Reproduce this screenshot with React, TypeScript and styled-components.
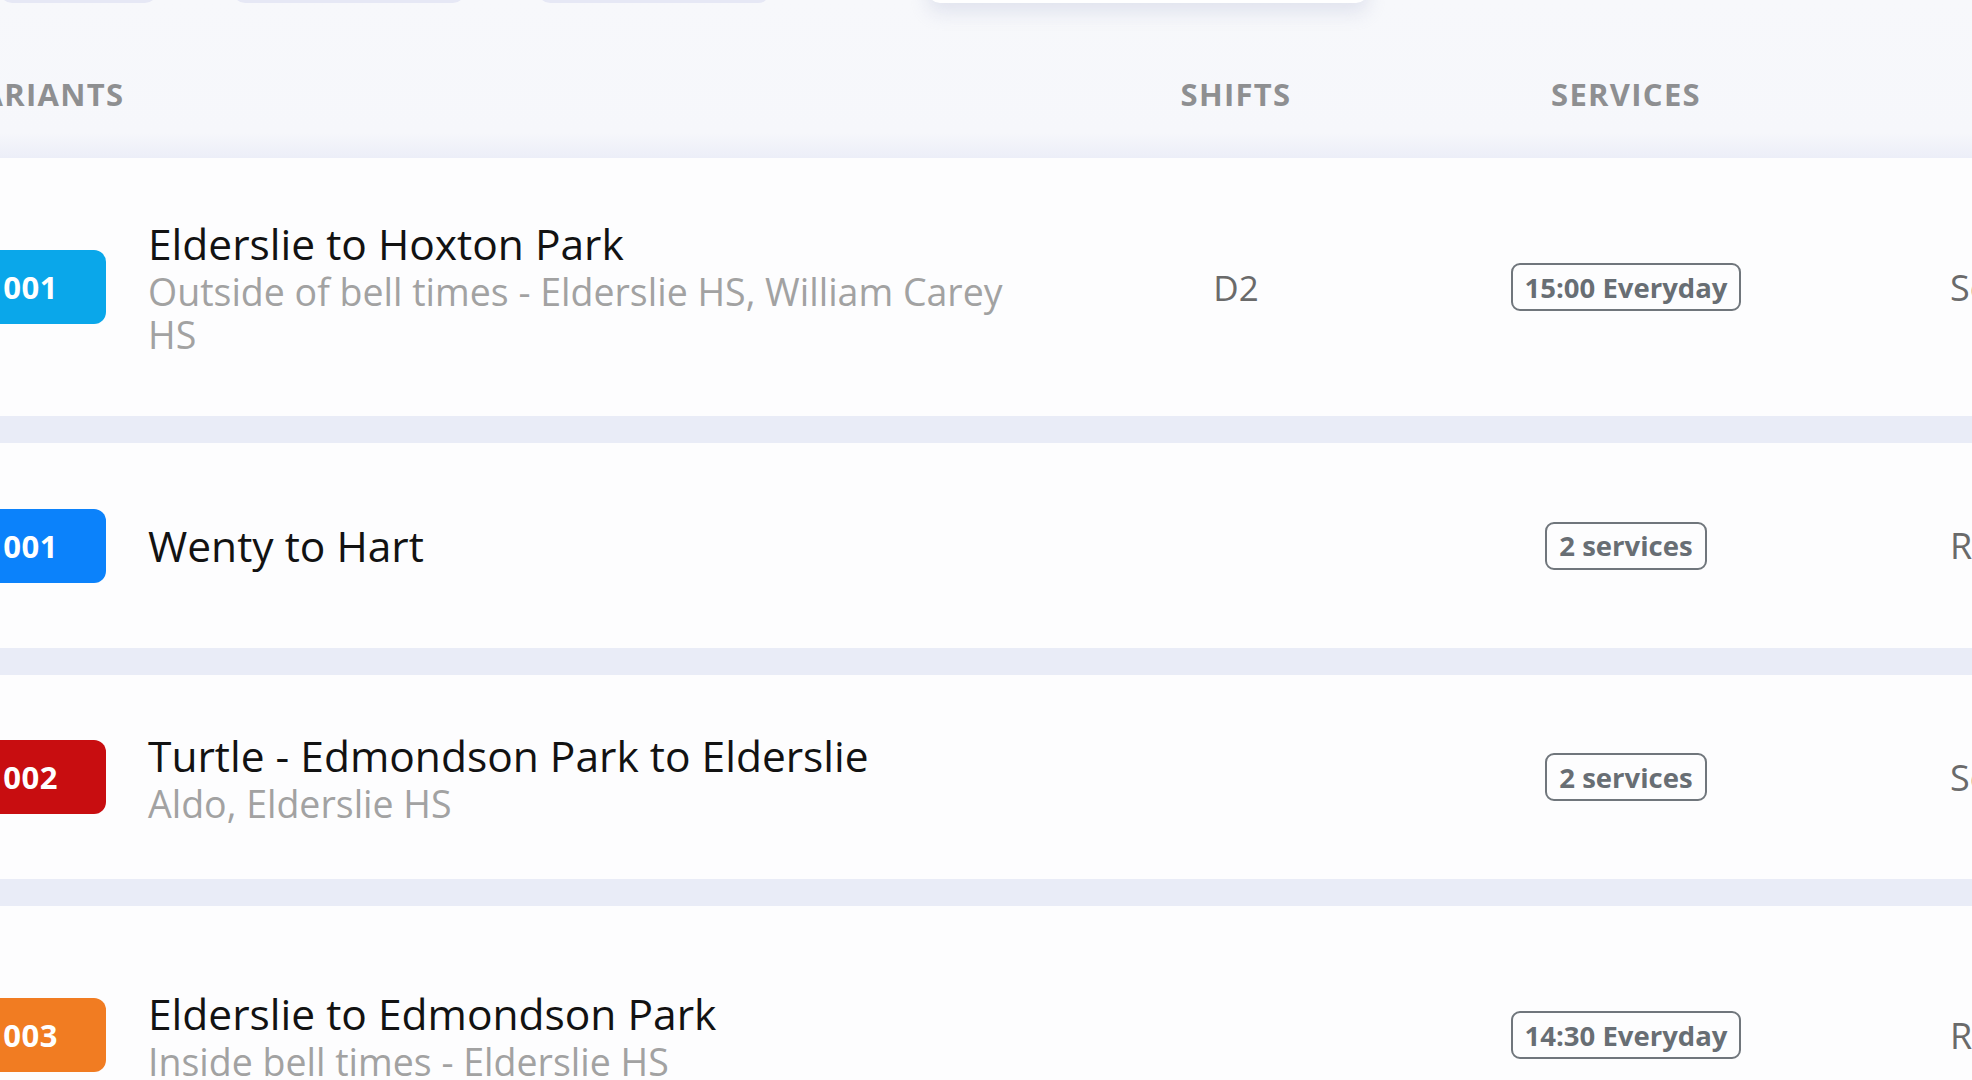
import React from "react";
import styled, { createGlobalStyle } from "styled-components";

const GlobalStyle = createGlobalStyle`
  html, body {
    margin: 0;
    padding: 0;
    background: #e9ecf7;
  }
  body {
    font-family: "Open Sans", "Noto Sans", sans-serif;
    -webkit-font-smoothing: antialiased;
  }
`;

const Screen = styled.div`
  width: 1972px;
  height: 1080px;
  overflow: hidden;
  background: #e9ecf7;
`;

const HeaderWrap = styled.div`
  background: linear-gradient(to bottom, #f7f8fb 0%, #f6f7fb 84%, #eceef8 100%);
  height: 158px;
  display: flex;
  flex-direction: column;
`;

const TopBar = styled.div`
  display: flex;
  align-items: flex-start;
  height: 48px;
  margin-top: -45px;
  flex-shrink: 0;
  position: relative;
  z-index: 1;
`;

const TopButton = styled.div<{ $w: number; $ml: number; $white?: boolean }>`
  width: ${(p) => p.$w}px;
  margin-left: ${(p) => p.$ml}px;
  height: 48px;
  border-radius: 12px;
  background: ${(p) => (p.$white ? "#ffffff" : "#e6e8f5")};
  box-shadow: ${(p) => (p.$white ? "0 10px 18px rgba(200, 205, 225, 0.45)" : "none")};
  flex-shrink: 0;
`;

const Header = styled.div`
  flex: 1;
  display: grid;
  grid-template-columns: 174px 912px 352px 428px 1fr;
  align-items: center;
  margin-left: -26px;
  padding-top: 27px;
`;

const HeadCell = styled.div<{ $align?: "start" | "center"; $span?: number; $offset?: number }>`
  grid-column: span ${(p) => p.$span ?? 1};
  margin-left: ${(p) => p.$offset ?? 0}px;
  text-align: ${(p) => (p.$align === "center" ? "center" : "left")};
  font-family: "Open Sans", sans-serif;
  font-weight: 700;
  font-size: 31px;
  letter-spacing: 1.3px;
  color: #8e8f91;
  text-transform: uppercase;
  white-space: nowrap;
`;

const List = styled.div`
  display: flex;
  flex-direction: column;
  gap: 27px;
`;

const Row = styled.div<{ $height: number }>`
  display: grid;
  grid-template-columns: 174px 912px 352px 428px 1fr;
  align-items: center;
  box-sizing: border-box;
  min-height: ${(p) => p.$height}px;
  margin-left: -26px;
  background: #fdfdfe;
`;

const Badge = styled.div<{ $color: string }>`
  width: 132px;
  height: 74px;
  box-sizing: border-box;
  border-radius: 12px;
  background: ${(p) => p.$color};
  color: #ffffff;
  display: flex;
  align-items: center;
  justify-content: flex-end;
  padding-right: 48px;
  font-family: "Open Sans", sans-serif;
  font-weight: 700;
  font-size: 31px;
  letter-spacing: 0.5px;
`;

const TextBlock = styled.div`
  display: flex;
  flex-direction: column;
`;

const Title = styled.div`
  font-family: "Open Sans", sans-serif;
  font-weight: 500;
  font-size: 42.5px;
  line-height: 52px;
  color: #121212;
  white-space: nowrap;
`;

const Subtitle = styled.div`
  font-family: "Open Sans", sans-serif;
  font-weight: 400;
  font-size: 37.5px;
  line-height: 43px;
  color: #a2a2a2;
  max-width: 900px;
`;

const Center = styled.div`
  display: flex;
  justify-content: center;
  align-items: center;
`;

const Shift = styled.span`
  font-family: "Open Sans", sans-serif;
  font-size: 35px;
  color: #6a6a6a;
`;

const Pill = styled.span`
  display: inline-flex;
  align-items: center;
  box-sizing: border-box;
  height: 48px;
  padding: 0 12px;
  border: 2.5px solid #70767c;
  border-radius: 9px;
  font-family: "Open Sans", sans-serif;
  font-weight: 700;
  font-size: 27.5px;
  color: #686e74;
  white-space: nowrap;
`;

const Status = styled.div`
  padding-left: 110px;
  font-family: "Open Sans", sans-serif;
  font-size: 36px;
  color: #6a6a6a;
  white-space: nowrap;
`;

type Variant = {
  code: string;
  color: string;
  title: string;
  subtitle?: string;
  shift?: string;
  service: string;
  status: string;
  height: number;
};

const variants: Variant[] = [
  {
    code: "001",
    color: "#0aa7ea",
    title: "Elderslie to Hoxton Park",
    subtitle: "Outside of bell times - Elderslie HS, William Carey HS",
    shift: "D2",
    service: "15:00 Everyday",
    status: "Scheduled",
    height: 258,
  },
  {
    code: "001",
    color: "#0b82fb",
    title: "Wenty to Hart",
    service: "2 services",
    status: "Running",
    height: 205,
  },
  {
    code: "002",
    color: "#c80d10",
    title: "Turtle - Edmondson Park to Elderslie",
    subtitle: "Aldo, Elderslie HS",
    service: "2 services",
    status: "Scheduled",
    height: 204,
  },
  {
    code: "003",
    color: "#f17c22",
    title: "Elderslie to Edmondson Park",
    subtitle: "Inside bell times - Elderslie HS",
    service: "14:30 Everyday",
    status: "Running",
    height: 258,
  },
];

export default function App() {
  return (
    <>
      <GlobalStyle />
      <Screen>
        <HeaderWrap>
          <TopBar>
            <TopButton $w={157} $ml={0} />
            <TopButton $w={232} $ml={76} />
            <TopButton $w={232} $ml={73} />
            <TopButton $w={440} $ml={158} $white />
          </TopBar>
          <Header>
            <HeadCell $span={2} $offset={-14}>Variants</HeadCell>
            <HeadCell $align="center">Shifts</HeadCell>
            <HeadCell $align="center">Services</HeadCell>
            <HeadCell />
          </Header>
        </HeaderWrap>
        <List>
          {variants.map((v, i) => (
            <Row key={i} $height={v.height}>
              <Badge $color={v.color}>{v.code}</Badge>
              <TextBlock>
                <Title>{v.title}</Title>
                {v.subtitle && <Subtitle>{v.subtitle}</Subtitle>}
              </TextBlock>
              <Center>{v.shift && <Shift>{v.shift}</Shift>}</Center>
              <Center>
                <Pill>{v.service}</Pill>
              </Center>
              <Status>{v.status}</Status>
            </Row>
          ))}
        </List>
      </Screen>
    </>
  );
}
